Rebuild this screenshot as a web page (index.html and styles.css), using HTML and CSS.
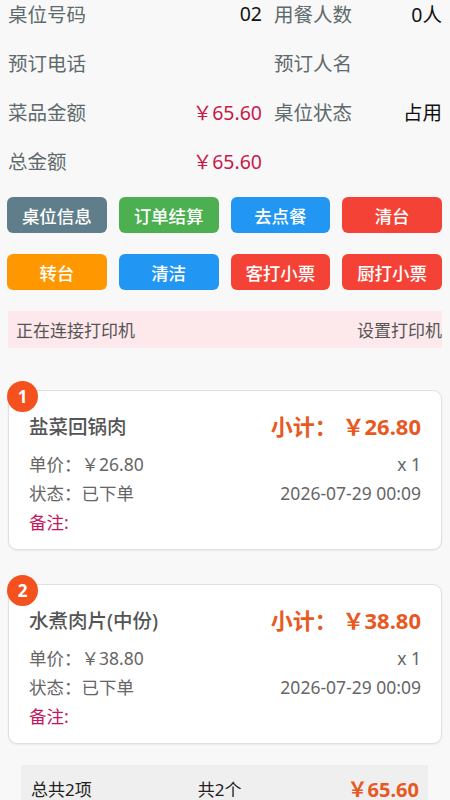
FILE: index.html
```html
<!DOCTYPE html>
<html lang="zh-CN">
<head>
    <meta charset="UTF-8">
    <meta name="viewport" content="width=device-width, initial-scale=1.0">
    <title>桌位详情</title>
    <link rel="stylesheet" href="styles.css">
</head>
<body>

    <!-- Table info -->
    <div class="info">
        <div class="info-row"><span class="label">桌位号码</span><span class="value">02</span></div>
        <div class="info-row"><span class="label">用餐人数</span><span class="value">0人</span></div>
        <div class="info-row"><span class="label">预订电话</span><span class="value"></span></div>
        <div class="info-row"><span class="label">预订人名</span><span class="value"></span></div>
        <div class="info-row"><span class="label">菜品金额</span><span class="value money">￥65.60</span></div>
        <div class="info-row"><span class="label">桌位状态</span><span class="value">占用</span></div>
        <div class="info-row"><span class="label">总金额</span><span class="value money">￥65.60</span></div>
    </div>

    <!-- Action buttons -->
    <div class="actions">
        <button class="btn btn-slate">桌位信息</button>
        <button class="btn btn-green">订单结算</button>
        <button class="btn btn-blue">去点餐</button>
        <button class="btn btn-red">清台</button>
        <button class="btn btn-orange">转台</button>
        <button class="btn btn-blue">清洁</button>
        <button class="btn btn-red">客打小票</button>
        <button class="btn btn-red">厨打小票</button>
    </div>

    <!-- Printer status -->
    <div class="printer-bar">
        <span>正在连接打印机</span>
        <span>设置打印机</span>
    </div>

    <!-- Ordered dishes -->
    <div class="dish-list">
        <div class="dish-card">
            <span class="badge">1</span>
            <div class="dish-head">
                <span class="dish-name">盐菜回锅肉</span>
                <span class="subtotal">小计： ￥26.80</span>
            </div>
            <div class="dish-line"><span>单价：￥26.80</span><span>x 1</span></div>
            <div class="dish-line"><span>状态：已下单</span><span>2026-07-29 00:09</span></div>
            <div class="dish-line note">备注:</div>
        </div>

        <div class="dish-card">
            <span class="badge">2</span>
            <div class="dish-head">
                <span class="dish-name">水煮肉片(中份)</span>
                <span class="subtotal">小计： ￥38.80</span>
            </div>
            <div class="dish-line"><span>单价：￥38.80</span><span>x 1</span></div>
            <div class="dish-line"><span>状态：已下单</span><span>2026-07-29 00:09</span></div>
            <div class="dish-line note">备注:</div>
        </div>
    </div>

    <!-- Totals -->
    <div class="summary">
        <span>总共2项</span>
        <span>共2个</span>
        <span class="summary-total">￥65.60</span>
    </div>

</body>
</html>
```

FILE: styles.css
```css
body {
    margin: 0;
    background-color: #f8f8f8;
    font-family: "Noto Sans", "Noto Sans CJK SC", sans-serif;
    color: #222;
}
.info {
    display: grid;
    grid-template-columns: 254px 1fr;
    column-gap: 12px;
    row-gap: 19px;
    padding: 0 8px;
    margin-top: -2px;
    font-size: 19.5px;
}
.info-row {
    height: 30px;
    display: flex;
    align-items: center;
    justify-content: space-between;
}
.label {
    color: #5f6a6d;
}
.value {
    color: #111;
}
.money {
    color: #c8194b;
}
.actions {
    display: grid;
    grid-template-columns: repeat(4, 1fr);
    column-gap: 12px;
    row-gap: 21px;
    padding: 0 8px 0 7px;
    margin-top: 22px;
}
.btn {
    height: 36px;
    border: none;
    border-radius: 6px;
    color: #fff;
    font-family: inherit;
    font-size: 17.5px;
    font-weight: 500;
    cursor: pointer;
}
.btn-slate { background-color: #607d8b; }
.btn-green { background-color: #4caf50; }
.btn-blue { background-color: #2196f3; }
.btn-red { background-color: #f44336; }
.btn-orange { background-color: #ff9800; }
.printer-bar {
    margin: 21px 8px 0 8px;
    height: 37px;
    padding: 0 0 0 8px;
    background-color: #fde8ec;
    display: flex;
    align-items: center;
    justify-content: space-between;
    font-size: 17px;
    color: #555;
}
.dish-list {
    margin-top: 42px;
    display: flex;
    flex-direction: column;
    gap: 34px;
}
.dish-card {
    position: relative;
    margin: 0 8px;
    padding: 20px 20px 13px 20px;
    background-color: #fff;
    border: 1px solid #e0e0e0;
    border-radius: 9px;
    box-shadow: 0 1px 2px rgba(0, 0, 0, 0.06);
}
.badge {
    position: absolute;
    left: -2px;
    top: -10px;
    width: 31px;
    height: 31px;
    border-radius: 50%;
    background-color: #f4511e;
    color: #fff;
    font-size: 17px;
    font-weight: bold;
    display: flex;
    align-items: center;
    justify-content: center;
}
.dish-head {
    height: 28px;
    display: flex;
    align-items: center;
    justify-content: space-between;
    margin-bottom: 10px;
}
.dish-name {
    font-size: 19.5px;
    font-weight: 500;
    color: #555;
}
.subtotal {
    font-size: 22px;
    font-weight: bold;
    color: #e8591f;
}
.dish-line {
    height: 29px;
    display: flex;
    align-items: center;
    justify-content: space-between;
    font-size: 17.5px;
    color: #666;
}
.note {
    color: #c2185b;
}
.summary {
    margin: 21px 22px 0 21px;
    height: 46px;
    padding: 0 9px 0 10px;
    background-color: #efefef;
    display: flex;
    align-items: center;
    justify-content: space-between;
    font-size: 17px;
    color: #222;
}
.summary-total {
    font-size: 20px;
    font-weight: bold;
    color: #e8591f;
}
```
